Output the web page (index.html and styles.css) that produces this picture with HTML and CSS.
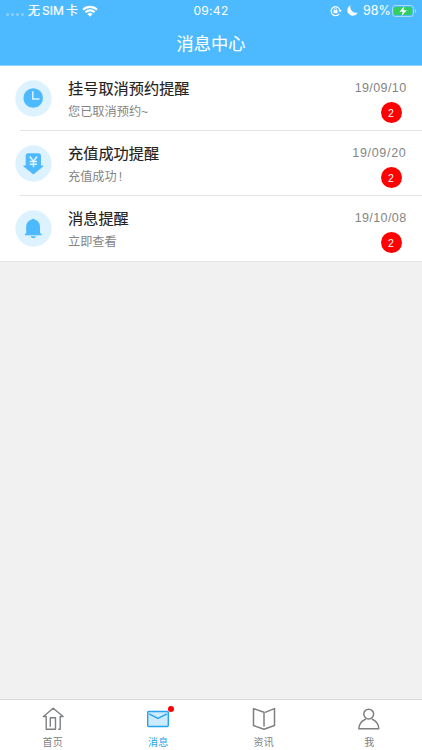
FILE: index.html
```html
<!DOCTYPE html>
<html lang="zh-CN">
<head>
<meta charset="utf-8">
<title>消息中心</title>
<link rel="stylesheet" href="styles.css">
</head>
<body>
<div class="app">
  <header class="header">
    <div class="status">
      <div class="status-left">
        <span class="signal"><i></i><i></i><i></i><i></i></span>
        <span class="carrier"><span>无</span><span class="sim">SIM</span><span>卡</span></span>
        <svg class="wifi" width="16" height="12" viewBox="0 0 16 12" fill="none" stroke="#fff" stroke-width="2.1"><path d="M1 4.7a10 10 0 0 1 14 0M3.4 7.2a6.6 6.6 0 0 1 9.2 0"/><path d="M5.4 9a3.8 3.8 0 0 1 5.2 0L8 11.7z" fill="#fff" stroke="none"/></svg>
      </div>
      <span class="time">09:42</span>
      <div class="status-right">
        <svg class="lock" width="12" height="12" viewBox="0 0 12 12" fill="none" stroke="#fff"><path d="M9.2 8.9A4.5 4.5 0 1 1 10 5.3" stroke-width="1.2"/><path d="M8.4 5.1h3.4l-1.7 2.4z" fill="#fff" stroke="none"/><path d="M4.3 5.3V4.5a1.2 1.2 0 0 1 2.4 0v.8" stroke-width=".8"/><path d="M3.5 5.2h4v3h-4z" fill="#fff" stroke="none"/></svg>
        <svg class="moon" width="11" height="11" viewBox="0 0 11 11"><path d="M3.600.3a5.400 5.400 0 1 0 7.100 7.100A5.600 5.600 0 0 1 3.600.3z" fill="#fff"/></svg>
        <span class="percent">98%</span>
        <svg class="battery" width="25" height="12" viewBox="0 0 25 12"><rect x=".5" y=".5" width="21" height="11" rx="3" fill="none" stroke="#a6dcff"/><rect x="2" y="2" width="18" height="8" rx="1.5" fill="#32cf60"/><path d="M23 4v4q1.3-.6 1.3-2T23 4z" fill="#a6dcff"/><path d="M12.5 1L7.4 6.7h3.3L9.5 11l5.3-5.8h-3.4z" fill="#fff"/></svg>
      </div>
    </div>
    <h1 class="title">消息中心</h1>
  </header>
  <main class="list">
    <article class="row">
      <svg class="icon" width="37" height="37" viewBox="0 0 37 37"><circle cx="18.5" cy="18.5" r="18.2" fill="#ddf2ff"/><circle cx="18.2" cy="18" r="9.8" fill="#4dbaff"/><path d="M17.8 11.3v7.700h6.700" fill="none" stroke="#ddf2ff" stroke-width="1.500"/></svg>
      <div class="body"><h2>挂号取消预约提醒</h2><p>您已取消预约~</p></div>
      <div class="meta"><time>19/09/10</time><span class="badge">2</span></div>
    </article>
    <article class="row">
      <svg class="icon" width="37" height="37" viewBox="0 0 37 37"><circle cx="18.5" cy="18.5" r="18.2" fill="#ddf2ff"/><path d="M13 8.300h10.400q2.600 0 2.600 2.600v9.500h2q.8.200.2 1L19 29q-.6.500-1.200 0l-9.300-7.600q-.5-.8.300-1h1.900v-9.500q0-2.600 2.300-2.600z" fill="#4dbaff"/><path d="M14.800 11.500l3.700 4.800 3.500-4.800M18.500 16.300v6M14.800 16.500h7.200M14.800 19.200h7.200" fill="none" stroke="#ddf2ff" stroke-width="1.500"/></svg>
      <div class="body"><h2>充值成功提醒</h2><p>充值成功<span class="bang">!</span></p></div>
      <div class="meta"><time class="wide">19/09/20</time><span class="badge">2</span></div>
    </article>
    <article class="row">
      <svg class="icon" width="37" height="37" viewBox="0 0 37 37"><circle cx="18.500" cy="18.500" r="18.200" fill="#ddf2ff"/><path d="M16.600 9.600a1.700 1.700 0 0 1 3 0c3.500.9 5.400 3.700 5.400 7.200v5.700c.2.900 1.200 1.300 1.700 1.800v.9H9.900v-.9c.6-.5 1.200-1 1.300-1.900v-5.600c0-3.500 2.100-6.300 5.400-7.200zM15.500 26.200h5.600c-.9 2.500-4.700 2.500-5.600 0z" fill="#4dbaff"/></svg>
      <div class="body"><h2>消息提醒</h2><p>立即查看</p></div>
      <div class="meta"><time>19/10/08</time><span class="badge">2</span></div>
    </article>
  </main>
  <nav class="tabs">
    <a class="tab">
      <svg width="24" height="24" viewBox="0 0 24 24" fill="none" stroke="#7d8083" stroke-width="1.400" stroke-linejoin="round" stroke-linecap="round"><path d="M5.200 9.500v12.800h9.300V10.800H9.300v8.500M19.200 9.500v12.800h-1.400M5.200 9.500H2.400L12.200 1.300l9.900 8.200h-2.900"/></svg>
      <span>首页</span>
    </a>
    <a class="tab active">
      <svg width="24" height="24" viewBox="0 0 24 24" fill="#ccebff" stroke="#27a2ee" stroke-width="1.400" stroke-linejoin="round" stroke-linecap="round"><rect x="1.700" y="4.500" width="20.600" height="15" rx="1"/><path d="M3.500 7.200l8.500 4.200 8.500-4.200" fill="none"/></svg>
      <i class="dot"></i>
      <span>消息</span>
    </a>
    <a class="tab">
      <svg width="24" height="24" viewBox="0 0 24 24" fill="none" stroke="#7d8083" stroke-width="1.500" stroke-linejoin="round" stroke-linecap="round"><path d="M12 19V5.300L1.500 1.600v16.900L12 22.300l10.500-3.800V1.600l-8.800 3.500"/></svg>
      <span>资讯</span>
    </a>
    <a class="tab">
      <svg width="24" height="24" viewBox="0 0 24 24" fill="none" stroke="#7d8083" stroke-width="1.500" stroke-linejoin="round" stroke-linecap="round"><circle cx="11.700" cy="7.100" r="4.900"/><path d="M8.500 12.200c-3.700 1.500-6.500 4.800-6.700 9.600h20c-.2-4.800-2.800-8.100-6.500-9.600"/></svg>
      <span>我</span>
    </a>
  </nav>
</div>
</body>
</html>
```
FILE: styles.css
```css
* { box-sizing: border-box; }
body { margin: 0; font-family: "Liberation Sans", "Noto Sans CJK SC", sans-serif; }
h1, h2, p { margin: 0; font-weight: 400; }
svg { display: block; flex: none; }
.app { width: 422px; height: 750px; display: flex; flex-direction: column; background: #f1f1f1; overflow: hidden; }
.header { height: 66px; flex: none; background: #4dbaff; border-bottom: 1px solid #8ed4ff; color: #fff; }
.status { height: 20px; display: grid; grid-template-columns: 1fr auto 1fr; align-items: center; padding: 1px 6px 0; font-size: 12px; line-height: 18px; font-family: "Inter", "Noto Sans CJK SC", sans-serif; }
.status-left, .status-right { display: flex; align-items: center; }
.status-right { justify-content: flex-end; }
.signal { display: flex; gap: 2px; width: 22px; padding-top: 7px; }
.signal i { width: 3px; height: 3px; border-radius: 50%; background: #8bd0ff; }
.carrier { display: flex; gap: 2px; width: 54px; -webkit-text-stroke: .2px #fff; }
.sim { font-size: 12px; width: 22px; }
.time { font-size: 12px; letter-spacing: .3px; }
.lock { margin-right: 5px; }
.moon { margin-right: 5px; }
.percent { font-size: 12.500px; width: 26px; margin-right: 3px; }
.battery { margin-right: -1px; }
.title { font-size: 17.200px; line-height: 26px; margin-top: 11px; text-align: center; -webkit-text-stroke: .1px #fff; }
.list { background: #fff; border-bottom: 1px solid #e4e4e4; }
.row { height: 65px; display: flex; padding: 0 16px 0 15px; position: relative; }
.row + .row::before { content: ""; position: absolute; left: 20px; right: 0; top: -1px; height: 1px; background: #e3e3e3; }
.icon { margin-top: 14px; }
.body { flex: 1; margin-left: 16px; padding-top: 12px; }
.body h2 { font-size: 15.200px; line-height: 22px; color: #222; -webkit-text-stroke: .15px #222; }
.body p { font-size: 12.200px; line-height: 18px; margin-top: 3px; color: #858585; }
.bang { margin-left: 2px; }
.meta { display: flex; flex-direction: column; align-items: flex-end; padding-top: 14px; }
.meta time { font-size: 12.500px; line-height: 17px; color: #858585; letter-spacing: .4px; margin-right: -.5px; }
.meta .wide { letter-spacing: .7px; }
.badge { width: 21px; height: 21px; margin: 5px 4.500px 0 0; border-radius: 50%; background: #f00; color: #fff; font-size: 10.500px; line-height: 22px; text-align: center; }
.tabs { height: 51px; margin-top: auto; display: grid; grid-template-columns: repeat(4, 1fr); background: #fff; border-top: 1px solid #d8d8d8; }
.tab { display: flex; flex-direction: column; align-items: center; padding-top: 7px; position: relative; color: #7d8083; font-size: 10px; line-height: 14px; }
.tab span { margin-top: 5px; letter-spacing: .2px; }
.tab.active { color: #27a2ee; }
.dot { position: absolute; left: 62px; top: 6px; width: 6px; height: 6px; border-radius: 50%; background: #f00; }
```
